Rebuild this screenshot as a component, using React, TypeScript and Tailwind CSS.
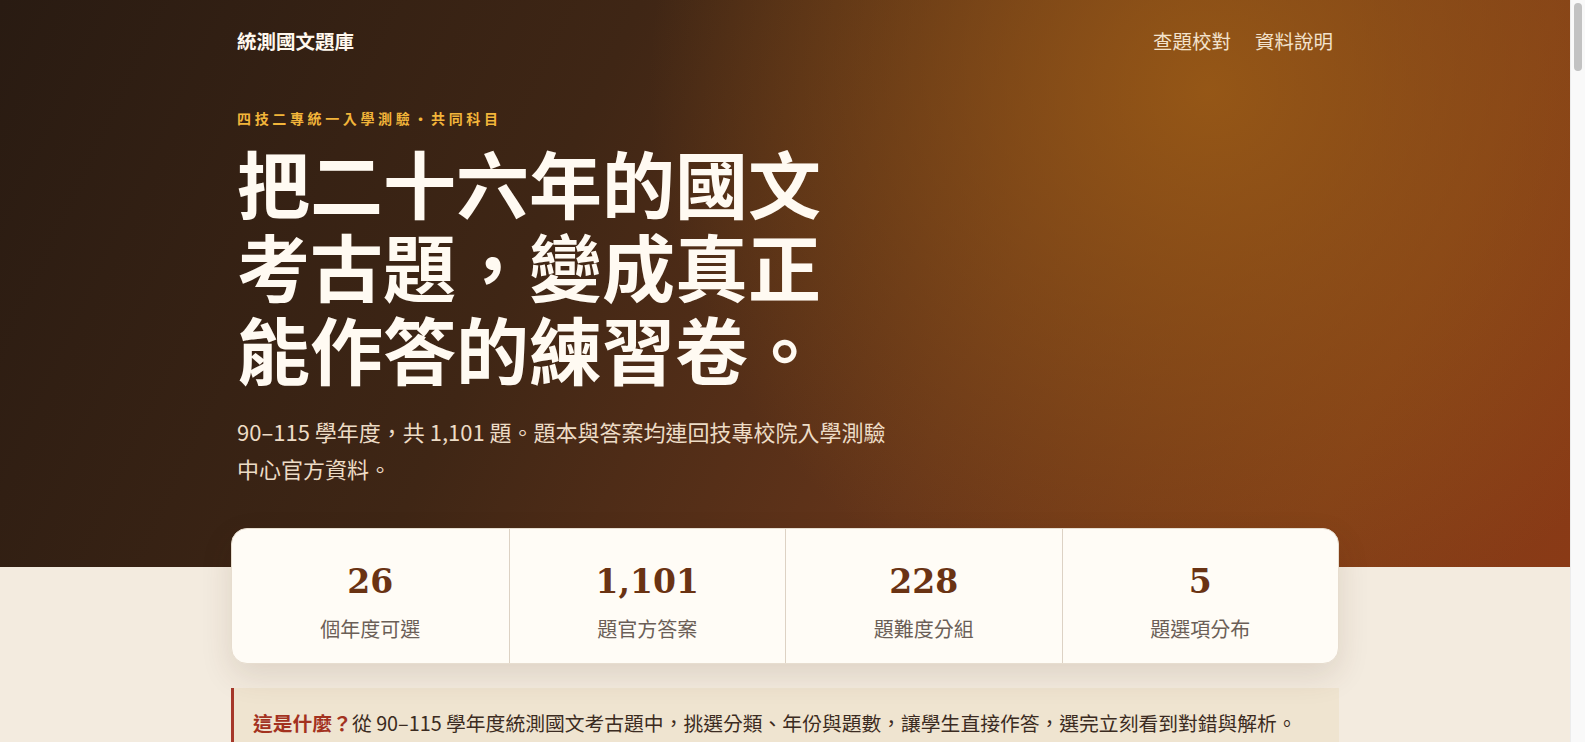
const STATS = [
  { value: '26', label: '個年度可選' },
  { value: '1,101', label: '題官方答案' },
  { value: '228', label: '題難度分組' },
  { value: '5', label: '題選項分布' },
];

const SANS = "font-['Noto_Sans_CJK_TC','Noto_Sans',sans-serif]";

function Scrollbar() {
  return (
    <div className="fixed top-0 right-0 z-50 h-screen w-[15px] border-l border-[#ececec] bg-[#f9f9f9]">
      <div className="mx-auto mt-[3px] h-[68px] w-[8px] rounded-full bg-[#c2c2c2]" />
    </div>
  );
}

export default function App() {
  return (
    <div className={`min-h-screen bg-[#f3ebdf] pr-[15px] ${SANS}`}>
      <Scrollbar />

      {/* Hero */}
      <header className="bg-[radial-gradient(circle_560px_at_77%_16%,rgba(156,92,22,0.85),rgba(156,92,22,0)_100%),linear-gradient(115deg,#291b12_0%,#3f2615_35%,#65351a_62%,#803d18_85%,#8a3a16_100%)]">
        <div className="mx-auto max-w-[1108px] px-[6px] pb-[80px]">
          <nav className="flex h-[82px] items-center justify-between">
            <a className="text-[19.5px] font-bold text-[#fff8ee]">統測國文題庫</a>
            <div className="flex items-center gap-[24px] text-[19.5px] text-[#f3e2cc]">
              <a>查題校對</a>
              <a>資料說明</a>
            </div>
          </nav>

          <p className="mt-[26px] text-[14px] leading-[21px] font-bold tracking-[0.26em] text-[#f2b53a]">
            四技二專統一入學測驗・共同科目
          </p>
          <h1 className="mt-[11px] max-w-[610px] text-[73px] leading-[83px] font-bold text-[#fffaf2]">
            把二十六年的國文考古題，變成真正能作答的練習卷。
          </h1>
          <p className="mt-[24px] max-w-[650px] text-[22px] leading-[37px] text-[#eddcc6]">
            90–115 學年度，共 1,101 題。題本與答案均連回技專校院入學測驗中心官方資料。
          </p>
        </div>
      </header>

      <main className="mx-auto max-w-[1108px] pb-24">
        {/* Stats */}
        <section className="relative -mt-[39px] grid grid-cols-4 rounded-2xl border border-[#e7ddcf] bg-[#fffcf6] shadow-[0_12px_32px_rgba(70,40,15,0.12)]">
          {STATS.map((s, i) => (
            <div
              key={s.label}
              className={`flex h-[134px] flex-col items-center pt-[30px] ${i > 0 ? 'border-l border-[#ddd2c4]' : ''}`}
            >
              <span className="font-['DejaVu_Serif',serif] text-[33px] leading-[46px] font-bold text-[#6a3313]">
                {s.value}
              </span>
              <span className="mt-[10px] text-[20px] leading-[28px] text-[#6b5f57]">{s.label}</span>
            </div>
          ))}
        </section>

        {/* What is this */}
        <section className="mt-[24px] border-l-[3px] border-[#a6382a] bg-[#efe4d0] px-[19px] pt-[20px] pb-[18px]">
          <p className="text-[19.8px] leading-[30px] text-[#3b2b21]">
            <strong className="font-bold text-[#a3321f]">這是什麼？</strong>
            從 90–115 學年度統測國文考古題中，挑選分類、年份與題數，讓學生直接作答，選完立刻看到對錯與解析。
          </p>
        </section>

        <div className="min-h-[7400px]" />
      </main>
    </div>
  );
}
